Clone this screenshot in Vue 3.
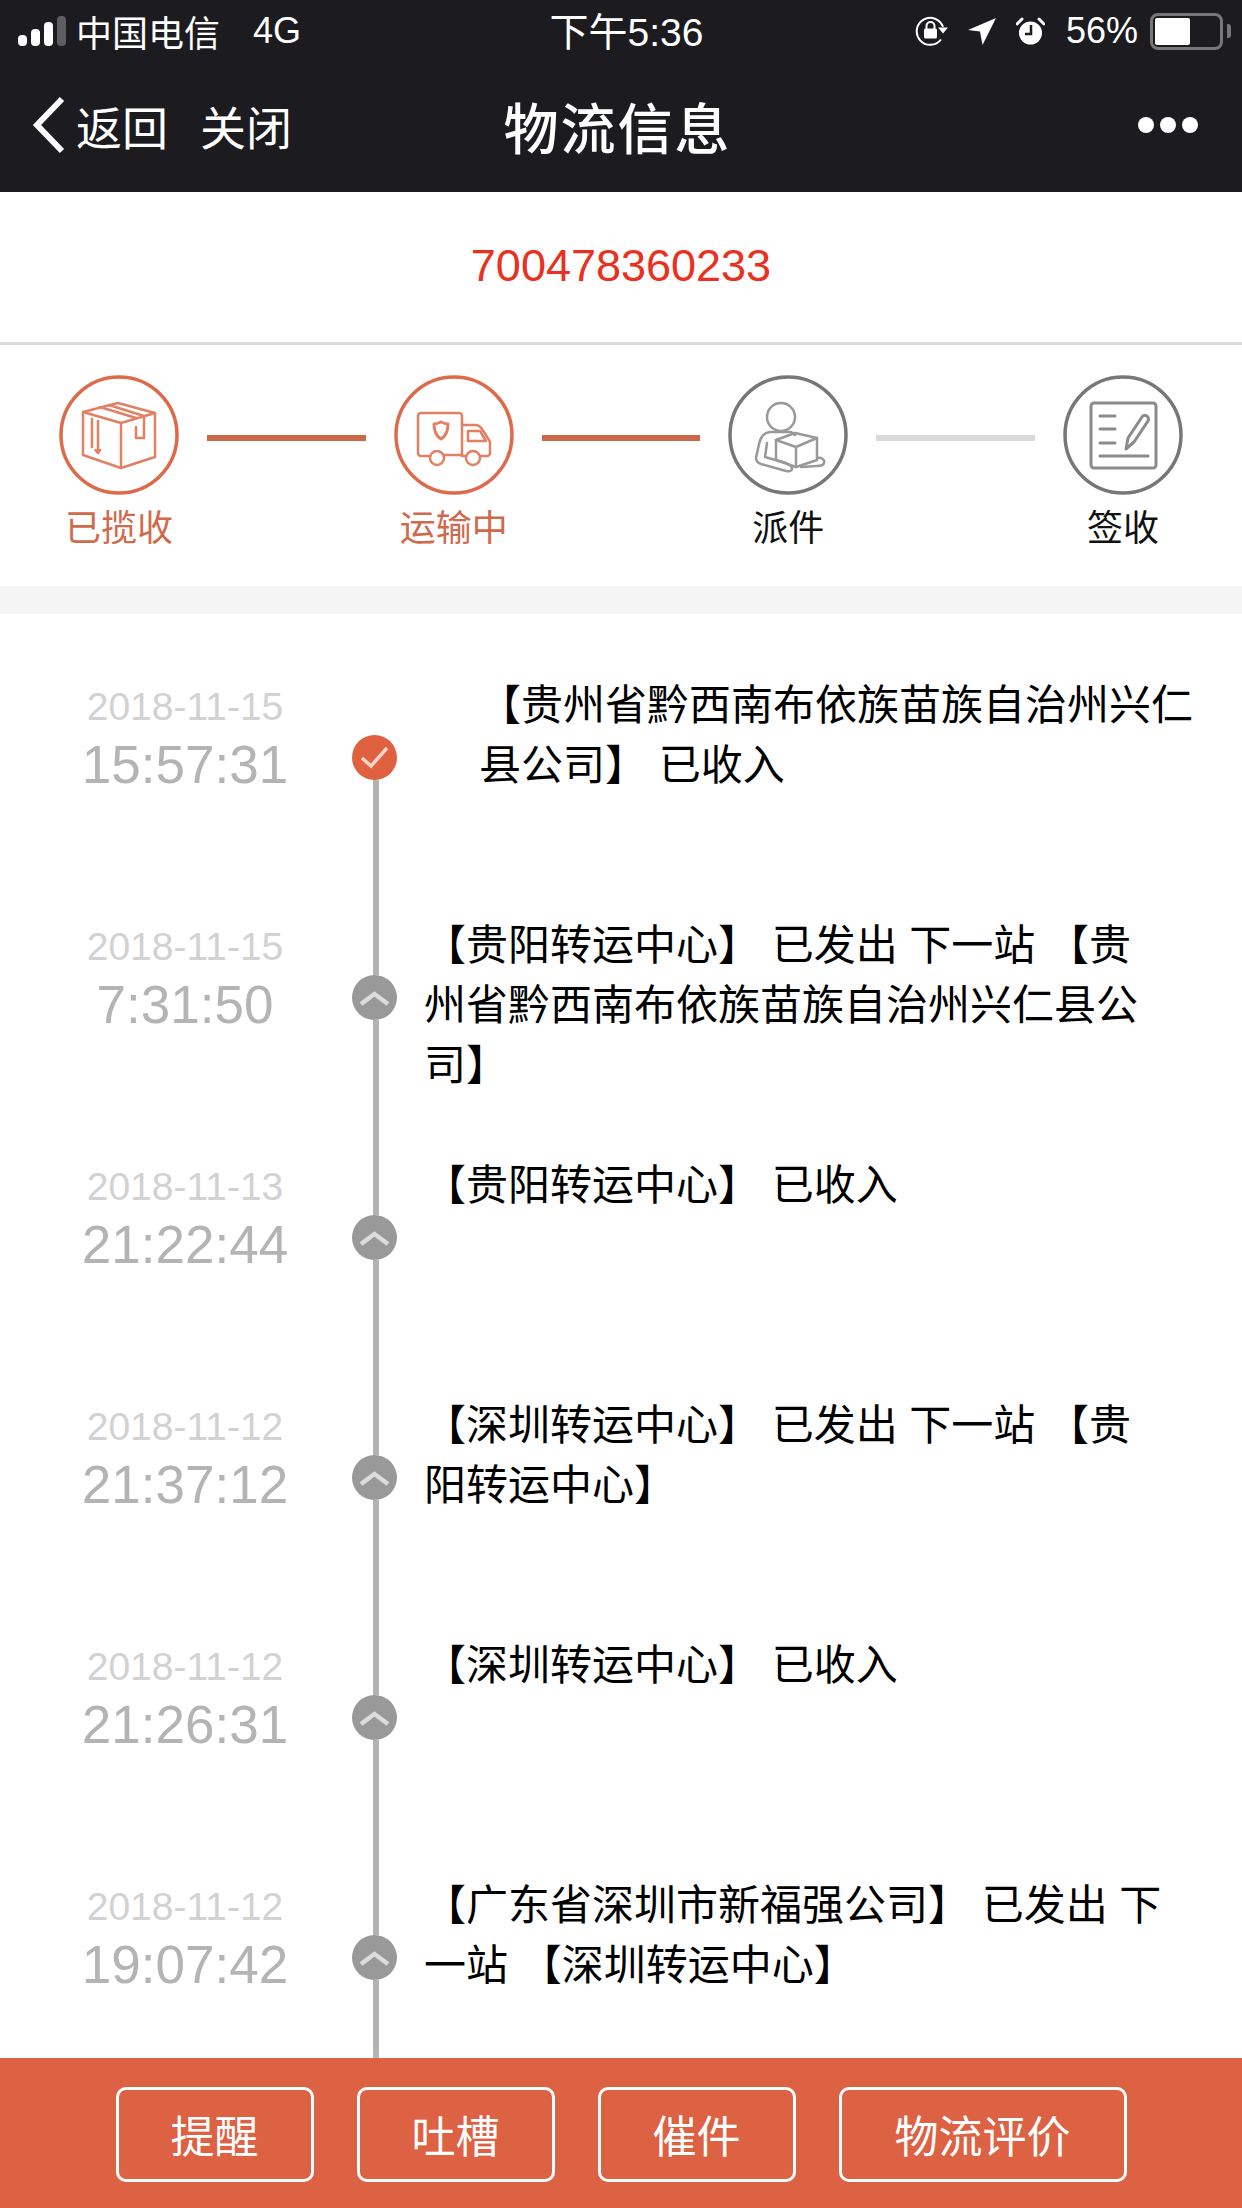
<template>
  <div class="page">
    <header class="top">
      <div class="status">
        <div class="status-left">
          <div class="signal">
            <i class="bar b1"></i><i class="bar b2"></i><i class="bar b3"></i><i class="bar b4"></i>
          </div>
          <span class="carrier">中国电信</span>
          <span class="net">4G</span>
        </div>
        <div class="clock">下午5:36</div>
        <div class="status-right">
          <svg class="ic-lock" width="34" height="30" viewBox="0 0 34 30">
            <path d="M26 23.5A13.5 13.5 0 1 1 28 11" fill="none" stroke="#fff" stroke-width="2" />
            <path d="M23 11.5h10l-5 6z" fill="#fff" />
            <rect x="9" y="12.5" width="13" height="10" rx="1.5" fill="#fff" />
            <path d="M11.5 13V10a4 4 0 0 1 8 0v3" fill="none" stroke="#fff" stroke-width="2" />
          </svg>
          <svg class="ic-loc" width="28" height="27" viewBox="0 0 28 27">
            <path d="M28 0L14.5 27l-2.5-13.5L0 12z" fill="#fff" />
          </svg>
          <svg class="ic-alarm" width="29" height="28" viewBox="0 0 29 28">
            <circle cx="14.5" cy="16" r="11.5" fill="#fff" />
            <path d="M1 7l5-5M28 7l-5-5" stroke="#fff" stroke-width="3" stroke-linecap="round" />
            <path d="M15 8v9H9" fill="none" stroke="#1b1b20" stroke-width="2.5" />
          </svg>
          <span class="pct">56%</span>
          <div class="battery"><div class="battery-fill" :style="{ width: '56%' }"></div></div>
          <i class="nub"></i>
        </div>
      </div>
      <nav class="nav">
        <div class="nav-left">
          <svg class="back" width="34" height="58" viewBox="0 0 34 58">
            <path d="M30 3L5 29l25 26" fill="none" stroke="#fff" stroke-width="6" />
          </svg>
          <span class="nav-link">返回</span>
          <span class="nav-link close">关闭</span>
        </div>
        <div class="nav-title">物流信息</div>
        <div class="nav-right"><i></i><i></i><i></i></div>
      </nav>
    </header>

    <div class="number">700478360233</div>

    <section class="steps">
      <template v-for="(s, i) in steps" :key="s.label">
        <div class="step" :class="{ done: s.done }">
          <svg class="step-icon" width="120" height="120" viewBox="0 0 120 120" fill="none" stroke="currentColor" stroke-width="2.500" stroke-linejoin="round" stroke-linecap="round">
            <circle cx="60" cy="60" r="58" stroke-width="3.500" />
            <g v-if="s.icon === 'box'" opacity="0.85">
              <path d="M24 37L59 28l37 10v44L62 93 24 80z" />
              <path d="M24 37l38 11 34-10M62 48v45" />
              <path d="M41 32l36 11M50 30l35 11v22h-8V52" />
              <path d="M33 44v28M39 46v30M36.500 75l2.500 3 2-3" />
            </g>
            <g v-else-if="s.icon === 'truck'" opacity="0.85">
              <path d="M36 81h-9a3 3 0 0 1-3-3V41a3 3 0 0 1 3-3h38a3 3 0 0 1 3 3v39H50" />
              <path d="M68 50h13c3 0 5 1 7 4l7 11a4 4 0 0 1 1 3v10a3 3 0 0 1-3 3h-6M72 81h-4" />
              <path d="M74 56h12l6 10H74z" />
              <circle cx="43" cy="83" r="7" />
              <circle cx="79" cy="83" r="7" />
              <path d="M40 49c3 0 5-1 7-2 2 1 4 2 7 2 0 7-2 12-7 15-5-3-7-8-7-15z" stroke-width="3" />
            </g>
            <g v-else-if="s.icon === 'person'" opacity="0.75">
              <circle cx="53" cy="42" r="14" />
              <path d="M42 57c-6 1-9 4-11 12l-3 14c0 3 2 5 5 6l25 7c4 1 8-1 5-5l-5-3-21-6 2-14" />
              <path d="M44 57h19l4 3" />
              <path d="M48 65l19-7 22 5v22l-21 7-20-7z" />
              <path d="M48 65l20 7 21-9M68 72v20" />
              <path d="M89 83c5-1 8 2 7 5-1 3-4 3-7 3l-16 1" />
            </g>
            <g v-else opacity="0.85">
              <rect x="28" y="28" width="65" height="65" rx="3" stroke-width="3" />
              <path d="M37 41h15M37 54h15M37 68h15M37 81h48" stroke-width="3" />
              <path d="M63 74l2-11 14-21c1-2 3-2 5-1 1 1 2 3 1 5L71 67z" stroke-width="3" />
            </g>
          </svg>
          <span class="step-label">{{ s.label }}</span>
        </div>
        <div v-if="i < steps.length - 1" class="step-line" :class="{ on: s.lineOn }"></div>
      </template>
    </section>

    <div class="band"></div>

    <main class="timeline">
      <div v-for="(r, i) in rows" :key="i" class="row" :class="{ first: i === 0 }">
        <div class="when">
          <div class="date">{{ r.date }}</div>
          <div class="time">{{ r.time }}</div>
        </div>
        <div class="rail">
          <div class="seg seg-top"></div>
          <div class="dot">
            <svg width="45" height="45" viewBox="0 0 45 45" fill="none">
              <path v-if="i === 0" d="M10 23l9 8 16-18" stroke="#f5d5ca" stroke-width="3.500" />
              <path v-else d="M9 29l13.500-10L36 29" stroke="#dcdcdc" stroke-width="4.500" />
            </svg>
          </div>
          <div class="seg seg-bottom"></div>
        </div>
        <div class="text">{{ r.text }}</div>
      </div>
    </main>

    <footer class="foot">
      <button v-for="b in buttons" :key="b" class="foot-btn">{{ b }}</button>
    </footer>
  </div>
</template>

<script setup>
const steps = [
  { label: '已揽收', icon: 'box', done: true, lineOn: true },
  { label: '运输中', icon: 'truck', done: true, lineOn: true },
  { label: '派件', icon: 'person', done: false, lineOn: false },
  { label: '签收', icon: 'note', done: false }
]

const rows = [
  { date: '2018-11-15', time: '15:57:31', text: '【贵州省黔西南布依族苗族自治州兴仁县公司】 已收入' },
  { date: '2018-11-15', time: '7:31:50', text: '【贵阳转运中心】 已发出 下一站 【贵州省黔西南布依族苗族自治州兴仁县公司】' },
  { date: '2018-11-13', time: '21:22:44', text: '【贵阳转运中心】 已收入' },
  { date: '2018-11-12', time: '21:37:12', text: '【深圳转运中心】 已发出 下一站 【贵阳转运中心】' },
  { date: '2018-11-12', time: '21:26:31', text: '【深圳转运中心】 已收入' },
  { date: '2018-11-12', time: '19:07:42', text: '【广东省深圳市新福强公司】 已发出 下一站 【深圳转运中心】' }
]

const buttons = ['提醒', '吐槽', '催件', '物流评价']
</script>

<style>
body {
  margin: 0;
  background: #fff;
  overflow: hidden;
}
</style>

<style scoped>
.page {
  width: 1242px;
  height: 2208px;
  display: flex;
  flex-direction: column;
  overflow: hidden;
  font-family: "Liberation Sans", "Noto Sans CJK SC", sans-serif;
  color: #000;
}

.top {
  height: 192px;
  flex-shrink: 0;
  background: #1b1b20;
  color: #fff;
}

.status {
  height: 62px;
  padding: 0 11px 0 18px;
  display: grid;
  grid-template-columns: 1fr auto 1fr;
  align-items: center;
  font-size: 36px;
}

.status-left {
  display: flex;
  align-items: center;
}

.signal {
  display: flex;
  align-items: flex-end;
  gap: 4px;
  height: 30px;
  margin-right: 10px;
}

.bar {
  width: 9px;
  border-radius: 4px;
  background: #fff;
}

.b1 { height: 11px; }
.b2 { height: 17px; }
.b3 { height: 24px; }
.b4 { height: 30px; background: #5e5e62; }

.net {
  margin-left: 33px;
}

.clock {
  font-size: 39px;
  padding: 0 0 5px 4px;
}

.status-right {
  display: flex;
  align-items: center;
  justify-content: flex-end;
}

.ic-loc {
  margin-left: 19px;
}

.ic-alarm {
  margin-left: 20px;
}

.pct {
  margin-left: 21px;
}

.battery {
  width: 63px;
  height: 27px;
  margin-left: 12px;
  padding: 2px;
  border: 3px solid #77777a;
  border-radius: 8px;
}

.battery-fill {
  height: 100%;
  background: #fff;
  border-radius: 2px;
}

.nub {
  width: 4px;
  height: 14px;
  margin-left: 4px;
  background: #77777a;
  border-radius: 0 3px 3px 0;
}

.nav {
  height: 130px;
  box-sizing: border-box;
  padding: 0 44px 4px 32px;
  display: grid;
  grid-template-columns: 1fr auto 1fr;
  align-items: center;
}

.nav-left {
  display: flex;
  align-items: center;
}

.nav-link {
  margin-left: 10px;
  font-size: 46px;
}

.nav-link.close {
  margin-left: 32px;
}

.nav-title {
  font-size: 55px;
  font-weight: 500;
  letter-spacing: 2px;
  padding-left: 5px;
}

.nav-right {
  display: flex;
  justify-content: flex-end;
  gap: 6px;
}

.nav-right i {
  width: 16px;
  height: 16px;
  border-radius: 50%;
  background: #fff;
}

.number {
  height: 153px;
  flex-shrink: 0;
  box-sizing: border-box;
  padding-bottom: 2px;
  display: flex;
  align-items: center;
  justify-content: center;
  border-bottom: 3px solid #dcdcdc;
  font-size: 45px;
  color: #ea3020;
}

.steps {
  height: 241px;
  flex-shrink: 0;
  box-sizing: border-box;
  padding: 30px 59px 0;
  display: flex;
  align-items: flex-start;
}

.step {
  width: 120px;
  display: flex;
  flex-direction: column;
  align-items: center;
  color: #777;
}

.step.done {
  color: #dd6a4a;
}

.step-icon {
  display: block;
}

.step-label {
  margin-top: 12px;
  font-size: 36px;
  line-height: 44px;
  white-space: nowrap;
  color: #111;
}

.step.done .step-label {
  color: #cf6a4c;
}

.step-line {
  flex: 1;
  height: 6px;
  margin: 60px 28px 0;
  background: #d9d9d9;
}

.step-line.on {
  background: #cc684a;
}

.band {
  height: 28px;
  flex-shrink: 0;
  background: #f5f5f5;
}

.timeline {
  flex: 1;
  min-height: 0;
  overflow: hidden;
  padding-top: 61px;
}

.row {
  height: 240px;
  display: grid;
  grid-template-columns: 352px 45px 1fr;
}

.when {
  padding: 2px 0 0 18px;
  text-align: center;
  line-height: 60px;
}

.date {
  font-size: 39px;
  color: #d2d2d2;
}

.time {
  margin-top: -2px;
  font-size: 53px;
  color: #b4b4b4;
}

.rail {
  display: flex;
  flex-direction: column;
}

.seg {
  width: 6px;
  margin-left: 21px;
  background: #b3b3b3;
}

.seg-top {
  height: 60px;
}

.seg-bottom {
  flex: 1;
}

.first .seg-top {
  background: none;
}

.dot {
  width: 45px;
  height: 45px;
  flex-shrink: 0;
  border-radius: 50%;
  background: #999;
}

.dot svg {
  display: block;
}

.first .dot {
  background: #e0613f;
}

.text {
  width: 745px;
  margin-left: 27px;
  padding-top: 1px;
  font-size: 42px;
  line-height: 60px;
  color: #000;
}

.first .text {
  width: 722px;
  margin-left: 82px;
}

.foot {
  height: 150px;
  flex-shrink: 0;
  box-sizing: border-box;
  padding-top: 2px;
  display: flex;
  align-items: center;
  justify-content: center;
  gap: 43px;
  background: #dd6143;
}

.foot-btn {
  height: 95px;
  padding: 0 52px;
  box-sizing: border-box;
  background: none;
  border: 3px solid #fff;
  border-radius: 10px;
  font-family: inherit;
  font-size: 44px;
  color: #fff;
}

.foot-btn:last-child {
  padding: 0 53px;
}
</style>
